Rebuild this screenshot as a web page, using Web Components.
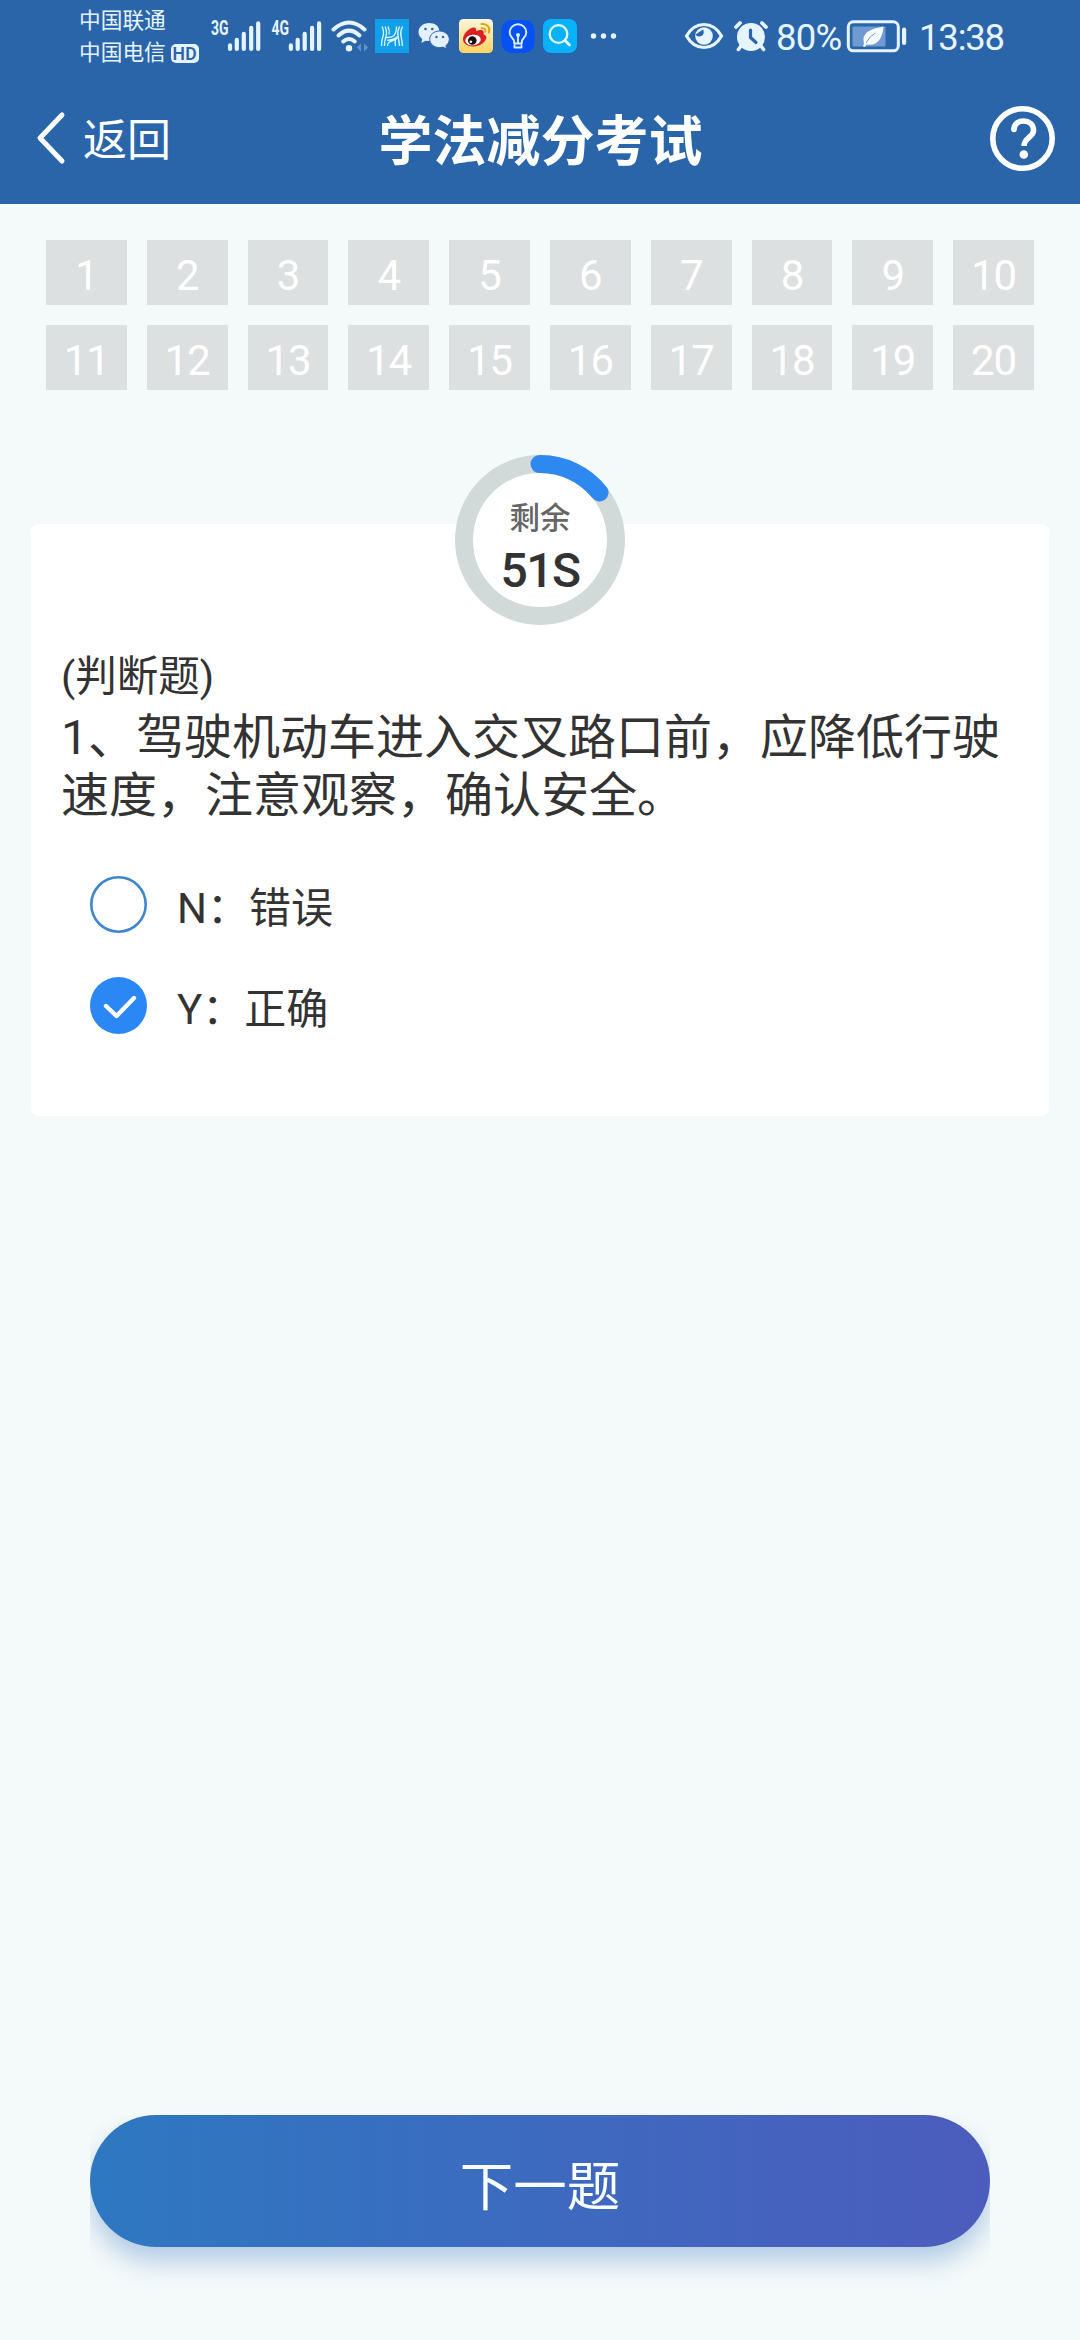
<!DOCTYPE html>
<html lang="zh-CN">
<head>
<meta charset="utf-8">
<title>学法减分考试</title>
<style>
html,body{margin:0;padding:0}
body{width:1080px;height:2340px;overflow:hidden;background:#f4f9fa;font-family:Roboto,"Noto Sans CJK SC",sans-serif;color:#333}
</style>
</head>
<body>
<exam-page></exam-page>
<script>
const define = (name, html, setup) => customElements.define(name, class extends HTMLElement {
  constructor() {
    super();
    const t = document.createElement('template');
    t.innerHTML = html;
    this.attachShadow({ mode: 'open' }).appendChild(t.content.cloneNode(true));
  }
  connectedCallback() { if (setup) setup(this, this.shadowRoot); }
});

/* Icons of the status bar: [left, width, drawing]; y runs from 16 to 56 */
const bars = x => [[0,45],[6.8,39.5],[13.8,33.5],[21.2,27.5],[28.2,23]]
  .map(([d, y]) => `<path d="M${x + d} ${y + .4}V49" stroke="#e6f4ff" stroke-width="4.2" stroke-linecap="round"/>`).join('');
const label = (x, s) => `<text x="${x}" y="35" textLength="17.5" lengthAdjust="spacingAndGlyphs" font-size="20" font-weight="700" fill="#e6f4ff">${s}</text>`;
const icons = {
  sim1: [200, 66, label(211, '3G') + bars(230)],
  sim2: [266, 62, label(271.5, '4G') + bars(290.9)],
  wifi: [328, 44, `<g fill="none" stroke="#e6f4ff" stroke-width="4" stroke-linecap="round"><path d="M333.5 29.5Q349 15.500 364.500 29.500"/><path d="M338.500 35.500Q349 25.800 359.500 35.500"/><path d="M343.200 41.500Q349 36.500 354.800 41.500"/></g><circle cx="349" cy="48.200" r="3.200" fill="#e6f4ff"/><path d="M361 43.500l-4.200 4 4.200 4zM364 43.500l4.200 4-4.200 4z" fill="#6392cb"/>`],
  hotel: [372, 40, `<rect x="375" y="19" width="34" height="34" fill="#129fe9"/><g fill="none" stroke="#dff6ff" stroke-width="1.300"><path d="M382 26.500q2.500 5 1 9.500t-1.500 10M385 26.500q2.500 5 1 9.500t-1.500 10M388 26.500q2 4 1 8"/><path d="M402.500 26.500q-2.500 5-1.500 9.500t1.500 10M399.500 26.500q-2.500 5-1.500 9.500t1.500 10M395.500 46q-1-4 .5-8"/><path d="M386 37.500c7 0 10-1 10.500-11M387 40.300c5 0 8-1.200 11-4M387.500 46c0-6 6-4 10-8"/></g>`],
  wechat: [412, 42, `<path d="M429 23c-6 0-10.500 4-10.500 9 0 3 1.400 5.200 3.800 6.900l-1 4 4.200-2.200c8 1.800 14-2.700 14-8.700s-4.500-9-10.500-9z" fill="#e4efff"/><path d="M439.500 31c-5.500 0-9.800 3.700-9.800 8.300s4.300 8.300 9.800 8.300c1.300 0 2.400-.2 3.500-.5l3.700 2-.9-3.400c2.200-1.500 3.500-3.800 3.500-6.400 0-4.600-4.300-8.300-9.800-8.300z" fill="#e4efff" stroke="#2b65a9"/><g fill="#2b65a9"><circle cx="425.500" cy="29" r="1.300"/><circle cx="432.300" cy="29" r="1.300"/><circle cx="436.500" cy="37" r="1.200"/><circle cx="443" cy="37" r="1.200"/></g>`],
  weibo: [454, 43, `<defs><linearGradient id="w" x2="0" y2="1"><stop stop-color="#fff5dc"/><stop offset="1" stop-color="#fdd35e"/></linearGradient></defs><rect x="459" y="19" width="34" height="34" rx="4.500" fill="url(#w)"/><path d="M463 39c0-6 9-13.500 12.500-11 1 .7.700 2.200.4 3.200 4.500-2 9-1.500 7.600 3 4.500 1.500 3.500 6-1.500 9.500-7 5-19 3-19-4.700z" fill="#db1f22"/><ellipse cx="473" cy="40" rx="7.800" ry="5.300" fill="#fff" transform="rotate(-8 473 40)"/><circle cx="472.300" cy="40.500" r="4.300" fill="#111"/><circle cx="470.800" cy="41.800" r="1.300" fill="#fff"/><g fill="none" stroke="#dda31b" stroke-width="2" stroke-linecap="round"><path d="M481.500 24c5.500-.8 9 3.500 7.500 8.500"/><path d="M481.800 28.200c2.500-.4 4 1.300 3.400 3.600"/></g>`],
  bulb: [497, 41, `<rect x="501.500" y="20" width="33" height="33" rx="10" fill="#0750f4"/><g fill="none" stroke="#d9eeff" stroke-width="1.900" stroke-linecap="round" stroke-linejoin="round"><path d="M514.200 43.500v-2c0-2.500-4.500-4.200-4.500-9a8.300 8.300 0 0 1 16.600 0c0 4.800-4.500 6.500-4.500 9v2zM514.500 45.500v2h7v-2M518 43v-8"/></g><circle cx="518" cy="35" r="2" fill="#d9eeff"/>`],
  search: [538, 42, `<rect x="543" y="19" width="34" height="34" rx="8" fill="#08b2fa"/><circle cx="558.500" cy="34" r="8.800" fill="none" stroke="#e9faff" stroke-width="2.300"/><path d="M565 40.500l4.500 4.500" stroke="#e9faff" stroke-width="2.800" stroke-linecap="round"/>`],
  more: [580, 100, `<g fill="#e6f4ff"><circle cx="593.500" cy="36" r="2.700"/><circle cx="603.500" cy="36" r="2.700"/><circle cx="613.500" cy="36" r="2.700"/></g>`],
  eye: [680, 48, `<path d="M686.500 36Q693 24.500 704 24.500T721.500 36Q715 47.500 704 47.500T686.500 36z" fill="none" stroke="#e6f4ff" stroke-width="3.200"/><circle cx="704" cy="36" r="8.800" fill="#e6f4ff"/><path d="M695.500 34.500a4 4 0 1 0 7.500-5" fill="#2b65a9"/>`],
  alarm: [728, 46, `<circle cx="751" cy="37" r="14" fill="#e6f4ff"/><g fill="none" stroke-linecap="round"><path d="M736 27l4-4M766 27l-4-4" stroke="#e6f4ff" stroke-width="3.800"/><path d="M741 46l-2.600 3.500M761 46l2.600 3.500" stroke="#e6f4ff" stroke-width="3.600"/><path d="M750.500 30v7.500l5.500 5" stroke="#2b65a9" stroke-width="3.200"/></g>`],
  battery: [843, 72, `<rect x="848.300" y="21.800" width="50" height="29" rx="5" fill="none" stroke="#e6f4ff" stroke-width="3"/><rect x="852.500" y="26.500" width="33" height="20" rx="1" fill="#6f9bd2"/><path d="M883.500 26.500c-9 2-20 4-20 13.500l.5 3.500-1 3 2 .5 1.500-2.500c11 2 16-6 17-18z" fill="#f5fbff"/><path d="M866 43q4-7.500 9.500-10" stroke="#6f9bd2" fill="none"/><rect x="902" y="27.500" width="4.200" height="17.500" rx="2" fill="#e6f4ff"/>`]
};
define('status-icon', `<style>:host{display:block;height:40px;flex:none}svg{display:block}</style><div id="d"></div>`, (el, r) => {
  const [x, w, art] = icons[el.getAttribute('name')];
  r.getElementById('d').innerHTML = `<svg width="${w}" height="40" viewBox="${x} 16 ${w} 40" font-family="Roboto, sans-serif">${art}</svg>`;
});

define('status-bar', `<style>
:host{display:flex;align-items:flex-start;height:72px;padding-left:79px;color:#e6f4ff}
.carriers{width:121px;flex:none;padding-top:5px;font-size:21.700px;line-height:32px;display:flex;flex-direction:column}
.row{display:flex;align-items:center;height:32px;gap:5px;white-space:nowrap}
.hd{width:28px;height:19px;line-height:20px;border-radius:5px;background:#e6f4ff;color:#2b65a9;font-size:17.500px;font-weight:600;text-align:center;letter-spacing:.3px}
status-icon{margin-top:16px}
.n{font-size:36.500px;line-height:40px;padding-top:18px;white-space:nowrap}
.pct{width:67px;padding-left:2px;letter-spacing:-.8px}
.time{letter-spacing:-1.200px;padding-left:4px}
</style>
<div class="carriers"><div class="row">中国联通</div><div class="row"><span>中国电信</span><span class="hd">HD</span></div></div>
<status-icon name="sim1"></status-icon><status-icon name="sim2"></status-icon><status-icon name="wifi"></status-icon><status-icon name="hotel"></status-icon><status-icon name="wechat"></status-icon><status-icon name="weibo"></status-icon><status-icon name="bulb"></status-icon><status-icon name="search"></status-icon><status-icon name="more"></status-icon><status-icon name="eye"></status-icon><status-icon name="alarm"></status-icon>
<div class="n pct">80%</div><status-icon name="battery"></status-icon><div class="n time">13:38</div>`);

define('nav-bar', `<style>
:host{display:grid;grid-template-columns:1fr auto 1fr;align-items:center;height:132px;box-sizing:border-box;padding:0 25px 0 35px;color:#fdffff}
.back{display:flex;align-items:center;gap:16px;font-size:44px;line-height:60px}
.back span{padding-top:5px}
h1{margin:0;font-size:54px;line-height:70px;font-weight:700;padding-top:9px;transform:translateX(-4.500px)}
svg{display:block}
.help{justify-self:end}
</style>
<div class="back"><svg width="32" height="54" viewBox="0 0 32 54"><path d="M27 4L5 27 27 50" fill="none" stroke="#fdffff" stroke-width="5" stroke-linecap="round" stroke-linejoin="round"/></svg><span>返回</span></div>
<h1><slot></slot></h1>
<svg class="help" width="65" height="65" viewBox="0 0 65 65"><g fill="none" stroke="#fdffff"><circle cx="32.500" cy="32.500" r="29.700" stroke-width="5.600"/><path d="M24 23.500C24 12 43.500 12 43.500 24.500c0 7-9.500 7-9.500 15.500" stroke-width="5.600"/></g><circle cx="24" cy="23.500" r="2.800" fill="#fdffff"/><circle cx="33.800" cy="48.500" r="4.300" fill="#fdffff"/></svg>`);

define('question-grid', `<style>
:host{display:grid;grid-template-columns:repeat(10,1fr);gap:20px;padding:36px 46px 0}
span{display:block;height:65px;box-sizing:border-box;padding-top:3px;background:#dce0e0;color:#fff;font-size:42px;line-height:65px;text-align:center;letter-spacing:-1px}
</style>`, (el, r) => {
  for (let i = 1; i <= 20; i++) {
    const s = document.createElement('span');
    s.textContent = i;
    r.appendChild(s);
  }
});

define('count-ring', `<style>
:host{display:grid;width:170px;height:170px}
svg,.t{grid-area:1/1}
.t{display:flex;flex-direction:column;align-items:center}
.l{font-size:30.500px;font-weight:500;line-height:40px;color:#666;padding-top:44px}
.v{font-size:48px;font-weight:500;line-height:50px;letter-spacing:-1.500px;padding-top:7px}
</style>
<svg width="170" height="170" viewBox="0 0 170 170"><circle cx="85" cy="85" r="76" fill="#fff" stroke="#d2d9d9" stroke-width="18"/><path d="M84.500 9A76 76 0 0 1 144.500 37.500" fill="none" stroke="#2d88f0" stroke-width="18" stroke-linecap="round"/></svg>
<div class="t"><div class="l">剩余</div><div class="v"><slot></slot></div></div>`);

define('answer-option', `<style>
:host{display:flex;height:57px;align-items:center;gap:30px;font-size:42px;line-height:57px}
svg{display:block}
.on{display:none}
:host([checked]) .on{display:inline}
:host([checked]) .off{display:none}
span{padding-top:7px}
</style>
<svg width="57" height="57" viewBox="0 0 57 57"><circle class="off" cx="28.500" cy="28.500" r="27.200" fill="#fff" stroke="#3f87cd" stroke-width="2.600"/><g class="on"><circle cx="28.500" cy="28.500" r="28.500" fill="#2a87f3"/><path d="M16 29L26.500 39 44 21" fill="none" stroke="#fdffff" stroke-width="4.400" stroke-linecap="round" stroke-linejoin="round"/></g></svg>
<span><slot></slot></span>`);

define('question-card', `<style>
:host{display:flex;flex-direction:column;height:592px;margin:134px 31px 0;box-sizing:border-box;background:#fff;border-radius:8px;padding:0 30px}
count-ring{align-self:center;margin-top:-69px}
.type{font-size:41.500px;line-height:50px;margin-top:27px}
.q{font-size:48px;line-height:57.500px;margin-top:7px}
.opts{display:flex;flex-direction:column;gap:44px;padding:52px 0 0 29px}
</style>
<count-ring>51S</count-ring>
<div class="type">(判断题)</div>
<div class="q"><slot></slot></div>
<div class="opts"><slot name="options"></slot></div>`);

define('next-button', `<style>
:host{display:block;margin:0 90px;clip-path:inset(0 0 -60px 0)}
button{display:block;width:100%;height:132px;border:0;border-radius:66px;padding:2px 0 0;background:linear-gradient(90deg,#2e78c1,#4c5cbd);box-shadow:0 15px 24px rgba(46,112,190,.32);color:#f8fdff;font:inherit;font-size:53.500px;text-align:center}
</style><button><slot></slot></button>`);

define('exam-page', `<style>
:host{display:flex;flex-direction:column;width:1080px;height:2340px;box-sizing:border-box;padding-bottom:93px}
header{height:204px;background:#2b65a9}
next-button{margin-top:auto}
</style>
<header><status-bar></status-bar><nav-bar>学法减分考试</nav-bar></header>
<question-grid></question-grid>
<question-card>1、驾驶机动车进入交叉路口前，应降低行驶速度，注意观察，确认安全。<answer-option slot="options">N：错误</answer-option><answer-option slot="options" checked>Y：正确</answer-option></question-card>
<next-button>下一题</next-button>`);
</script>
</body>
</html>
